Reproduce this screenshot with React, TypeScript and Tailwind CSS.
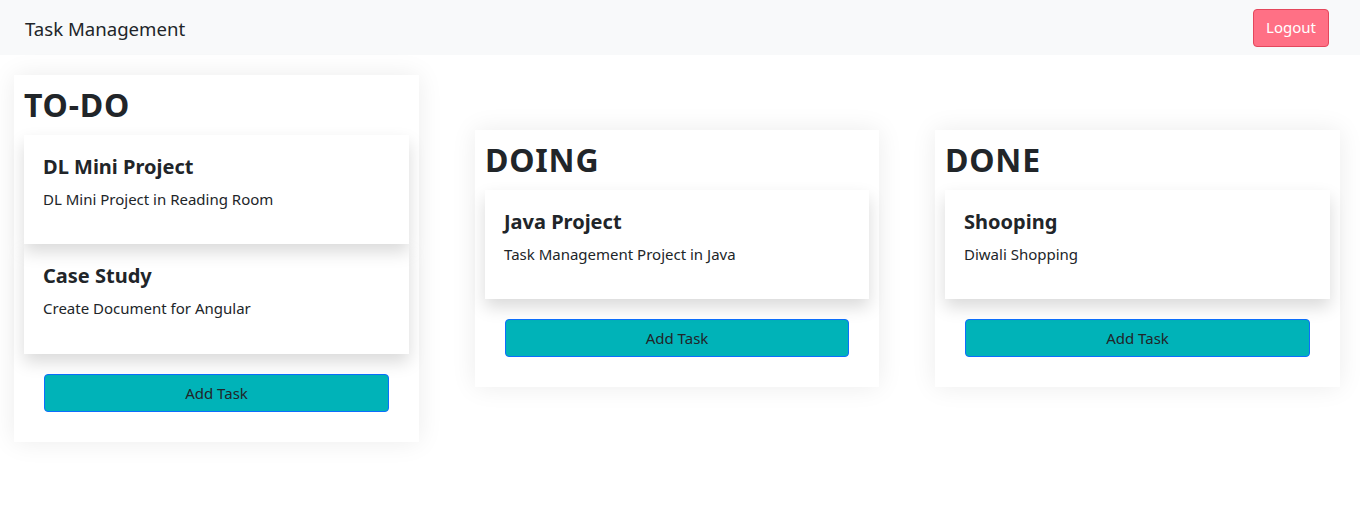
import React from 'react';

interface Task {
  title: string;
  description: string;
}

interface Column {
  name: string;
  width: string;
  tasks: Task[];
}

const COLUMNS: Column[] = [
  {
    name: 'TO-DO',
    width: 'w-[405px]',
    tasks: [
      { title: 'DL Mini Project', description: 'DL Mini Project in Reading Room' },
      { title: 'Case Study', description: 'Create Document for Angular' }
    ]
  },
  {
    name: 'DOING',
    width: 'w-[404px]',
    tasks: [{ title: 'Java Project', description: 'Task Management Project in Java' }]
  },
  {
    name: 'DONE',
    width: 'w-[405px]',
    tasks: [{ title: 'Shooping', description: 'Diwali Shopping' }]
  }
];

function TaskCard({ task, index }: { task: Task; index: number }) {
  return (
    <div
      className={`relative bg-white px-[19px] pt-[20px] shadow-[0_8px_16px_rgba(0,0,0,0.15)] ${
        index === 0 ? 'z-20 h-[109px]' : 'z-10 h-[110px]'
      }`}
    >
      <h5 className="text-[20px] font-bold leading-[24px] text-[#212529]">{task.title}</h5>
      <p className="mt-[9px] text-[15px] leading-[22px] text-[#212529]">{task.description}</p>
    </div>
  );
}

function BoardColumn({ column }: { column: Column }) {
  return (
    <div className={`${column.width} shrink-0 bg-white px-[10px] pt-[10px] pb-[30px] shadow-[0_0_24px_rgba(0,0,0,0.08)]`}>
      <h2 className="mb-[11px] text-[32px] font-bold leading-[39px] tracking-[0.8px] text-[#212529]">
        {column.name}
      </h2>
      <div className="flex flex-col">
        {column.tasks.map((task, i) => (
          <TaskCard key={task.title} task={task} index={i} />
        ))}
      </div>
      <div className="mt-[20px] px-[20px]">
        <button className="h-[38px] w-full rounded-[4px] border border-[#0d6efd] bg-[#00b3b8] pt-[1px] text-[15px] text-[#212529]">
          Add Task
        </button>
      </div>
    </div>
  );
}

export default function App() {
  return (
    <div className="min-h-[519px] bg-white font-['Noto_Sans',sans-serif]">
      <nav className="flex h-[55px] items-center justify-between bg-[#f8f9fa] pl-[25px] pr-[31px]">
        <span className="pt-[2px] text-[18.6px] text-[#212529]">Task Management</span>
        <button className="h-[38px] rounded-[4px] border border-[#e4475c] bg-[#ff7085] px-[12px] text-[15px] text-white">
          Logout
        </button>
      </nav>
      <div className="flex items-center gap-[56px] pl-[14px] pt-[20px]">
        {COLUMNS.map(col => (
          <BoardColumn key={col.name} column={col} />
        ))}
      </div>
    </div>
  );
}
